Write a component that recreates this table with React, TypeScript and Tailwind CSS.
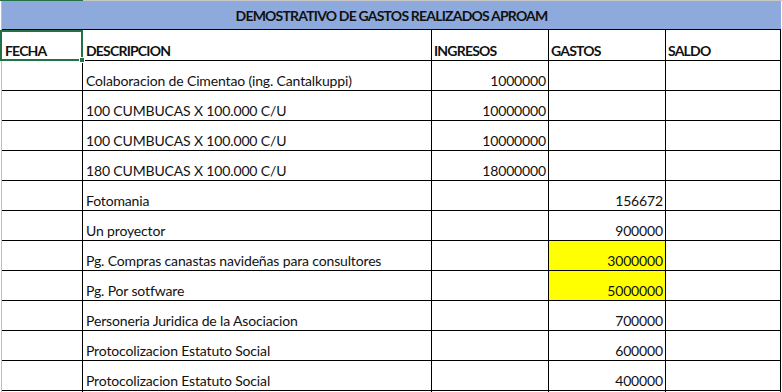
import React from 'react';

interface Row {
  desc: string;
  ingreso?: string;
  gasto?: string;
  highlight?: boolean;
}

const rows: Row[] = [
  { desc: 'Colaboracion de Cimentao (ing. Cantalkuppi)', ingreso: '1000000' },
  { desc: '100 CUMBUCAS X 100.000 C/U', ingreso: '10000000' },
  { desc: '100 CUMBUCAS X 100.000 C/U', ingreso: '10000000' },
  { desc: '180 CUMBUCAS X 100.000 C/U', ingreso: '18000000' },
  { desc: 'Fotomania', gasto: '156672' },
  { desc: 'Un proyector', gasto: '900000' },
  { desc: 'Pg. Compras canastas navideñas para consultores', gasto: '3000000', highlight: true },
  { desc: 'Pg. Por sotfware', gasto: '5000000', highlight: true },
  { desc: 'Personeria Juridica de la Asociacion', gasto: '700000' },
  { desc: 'Protocolizacion Estatuto Social', gasto: '600000' },
  { desc: 'Protocolizacion Estatuto Social', gasto: '400000' },
  { desc: '' },
];

const cols = 'grid grid-cols-[81px_349px_117px_117px_115px]';
const cell = 'h-[30px] border-r border-b border-black flex items-end leading-[18px] whitespace-nowrap overflow-hidden';

const App: React.FC = () => {
  return (
    <div className="relative w-[782px] h-[392px] overflow-hidden bg-white text-[14px] text-[#111] font-['Lato','Liberation_Sans',sans-serif] tracking-[-0.15px]">
      {/* top edge */}
      <div className="flex h-px">
        <div className="w-[83px] bg-[#217346]" />
        <div className="flex-1 bg-[#c8c8c8]" />
      </div>

      <div className="ml-px w-[780px] border-l border-[#bfbfbf]">
        <div className="h-[29px] bg-[#8ea9db] border-b border-black flex items-center justify-center font-bold tracking-[-0.8px] pt-px">
          DEMOSTRATIVO DE GASTOS REALIZADOS APROAM
        </div>

        <div className={`${cols} font-bold tracking-[-0.8px]`}>
          <div className={`${cell} h-[31px] pl-[3px]`}>FECHA</div>
          <div className={`${cell} h-[31px] pl-[3px]`}>DESCRIPCION</div>
          <div className={`${cell} h-[31px] pl-[2px]`}>INGRESOS</div>
          <div className={`${cell} h-[31px] pl-[2px]`}>GASTOS</div>
          <div className={`${cell} h-[31px] pl-[2px]`}>SALDO</div>
        </div>

        {rows.map((r, i) => (
          <div key={i} className={cols}>
            <div className={cell} />
            <div className={`${cell} pl-[3px]`}>{r.desc}</div>
            <div className={`${cell} justify-end pr-[2px]`}>{r.ingreso}</div>
            <div className={`${cell} justify-end pr-[2px] ${r.highlight ? 'bg-[#ffff00]' : ''}`}>{r.gasto}</div>
            <div className={cell} />
          </div>
        ))}
      </div>

      {/* selected cell */}
      <div className="absolute left-0 top-[30px] w-[83px] h-[31px] border-2 border-[#217346]" />
      <div className="absolute left-[79px] top-[57px] w-[6px] h-[6px] bg-[#217346] border border-white" />
    </div>
  );
};

export default App;
